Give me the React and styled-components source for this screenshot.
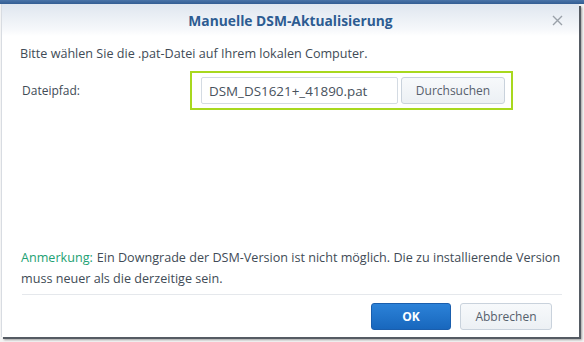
import React from "react";
import styled, { createGlobalStyle } from "styled-components";

const Global = createGlobalStyle`
  html, body { margin: 0; padding: 0; background: #ffffff; }
  body { font-family: "Open Sans", "Noto Sans", sans-serif; }
  #root { width: 584px; height: 342px; overflow: hidden; }
`;

const Page = styled.div`
  width: 584px;
  height: 342px;
  display: flex;
  flex-direction: column;
  background: #f4f4f4;
`;

const BackStrip = styled.div`
  height: 4px;
  background: linear-gradient(#4a74a8, #335d93);
  flex: none;
`;

const Dialog = styled.div`
  margin-left: 1px;
  width: 578px;
  height: 333px;
  background: #ffffff;
  border-left: 1px solid #d8dce2;
  box-sizing: border-box;
  box-shadow: 2px 2px 0 #555b63, 3px 3px 2px rgba(0, 0, 0, 0.35);
  display: flex;
  flex-direction: column;
  color: #414b56;
  font-size: 12px;
`;

const Header = styled.div`
  height: 32px;
  flex: none;
  display: grid;
  grid-template-columns: 40px 1fr 40px;
  align-items: center;
  background: linear-gradient(#dfe6ef, #f6f8fb 80%, #ffffff);
`;

const Title = styled.div`
  grid-column: 2;
  text-align: center;
  font-weight: 700;
  font-size: 13.8px;
  color: #2d5c92;
`;

const Close = styled.div`
  grid-column: 3;
  display: flex;
  justify-content: center;
  padding-right: 4px;
`;

const Body = styled.div`
  flex: 1;
  display: flex;
  flex-direction: column;
  padding: 9px 17px 0 18px;
`;

const Intro = styled.div`
  line-height: 18px;
  font-size: 12.6px;
`;

const Row = styled.div`
  display: flex;
  align-items: center;
  margin-top: 8px;
`;

const Label = styled.div`
  width: 168px;
  padding-left: 2px;
`;

const Highlight = styled.div`
  display: flex;
  align-items: center;
  border: 2px solid #a8d81e;
  padding: 4px 6px 4px 9px;
  width: 323px;
  box-sizing: border-box;
  height: 39px;
`;

const PathInput = styled.div`
  width: 198px;
  height: 27px;
  box-sizing: border-box;
  border: 1px solid #d4dbe3;
  border-radius: 2px;
  padding: 0 7px;
  display: flex;
  align-items: center;
  font-size: 13.4px;
  color: #48525d;
`;

const Button = styled.div`
  height: 27px;
  box-sizing: border-box;
  border-radius: 3px;
  display: flex;
  align-items: center;
  justify-content: center;
  font-size: 12px;
  flex: none;
  width: ${(p) => p.$w}px;
  margin-left: ${(p) => p.$ml || 0}px;
  border: 1px solid ${(p) => (p.$primary ? "#1a5ead" : "#c9d2dc")};
  background: ${(p) =>
    p.$primary
      ? "linear-gradient(#2c82d8, #1867bd)"
      : "linear-gradient(#f7f9fb, #ecf0f4)"};
  color: ${(p) => (p.$primary ? "#ffffff" : "#56606c")};
  font-weight: ${(p) => (p.$primary ? 700 : 400)};
`;

const Spacer = styled.div`
  flex: 1;
`;

const Note = styled.div`
  font-size: 12.6px;
  padding-left: 1px;
  padding-bottom: 5px;
`;

const NoteLine = styled.div`
  display: flex;
  gap: 4px;
  line-height: 21px;
  white-space: nowrap;
`;

const NoteLabel = styled.span`
  color: #22a173;
`;

const Footer = styled.div`
  display: flex;
  justify-content: flex-end;
  gap: 9px;
  border-top: 1px solid #e5e8ec;
  margin-left: 2px;
  padding: 8px 10px 7px 0;
`;

export default function App() {
  return (
    <>
      <Global />
      <Page>
        <BackStrip />
        <Dialog>
          <Header>
            <Title>Manuelle DSM-Aktualisierung</Title>
            <Close>
              <svg width="11" height="11" viewBox="0 0 11 11">
                <path d="M1 1 L10 10 M10 1 L1 10" stroke="#9aa1a9" strokeWidth="1.4" />
              </svg>
            </Close>
          </Header>
          <Body>
            <Intro>Bitte wählen Sie die .pat-Datei auf Ihrem lokalen Computer.</Intro>
            <Row>
              <Label>Dateipfad:</Label>
              <Highlight>
                <PathInput>DSM_DS1621+_41890.pat</PathInput>
                <Button $w={104} $ml={3}>Durchsuchen</Button>
              </Highlight>
            </Row>
            <Spacer />
            <Note>
              <NoteLine>
                <NoteLabel>Anmerkung:</NoteLabel>
                <span>Ein Downgrade der DSM-Version ist nicht möglich. Die zu installierende Version</span>
              </NoteLine>
              <NoteLine>muss neuer als die derzeitige sein.</NoteLine>
            </Note>
            <Footer>
              <Button $primary $w={80}>OK</Button>
              <Button $w={92}>Abbrechen</Button>
            </Footer>
          </Body>
        </Dialog>
      </Page>
    </>
  );
}
